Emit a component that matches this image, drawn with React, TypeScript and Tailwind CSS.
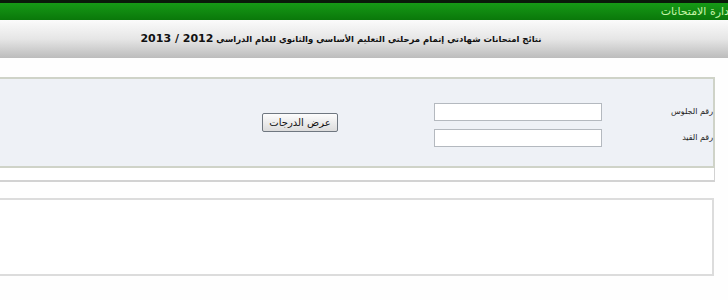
import React from "react";

export default function App() {
  return (
    <div className="w-[728px] h-[300px] overflow-hidden bg-[#fefefe] flex flex-col" style={{ fontFamily: '"DejaVu Sans", "Noto Sans", sans-serif' }}>
      <div className="h-[20px] border-t-[3px] border-[#0a1a0a] bg-gradient-to-b from-[#169a16] to-[#0a780a] flex justify-end items-center overflow-hidden shrink-0">
        <span dir="rtl" className="text-[11px] text-[#c6f3a8] mr-[-4px] whitespace-nowrap leading-none">إدارة الامتحانات</span>
      </div>
      <div className="h-[38px] shrink-0 bg-gradient-to-b from-[#fbfbfb] via-[#e6e6e6] to-[#bcbcbc] flex items-center justify-center">
        <span dir="rtl" className="text-[8.5px] font-bold text-[#111] whitespace-nowrap mr-[46px]">
          نتائج امتحانات شهادتي إتمام مرحلتي التعليم الأساسي والثانوي للعام الدراسي <span className="text-[11px]">2012 / 2013</span>
        </span>
      </div>
      <div className="h-[19px] shrink-0" />
      <div dir="rtl" className="w-[715px] h-[91px] shrink-0 bg-[#eef1f6] border-y-2 border-r-2 border-[#cfd3c8] flex items-start pt-[24px]">
        <div className="grid grid-cols-[40px_168px] gap-x-[71px] gap-y-[8px] items-center">
          <span className="text-[8px] text-[#222] whitespace-nowrap">رقم الجلوس</span>
          <input className="h-[18px] w-[168px] bg-white border border-[#b4b9bf] outline-none" />
          <span className="text-[8px] text-[#222] whitespace-nowrap">رقم القيد</span>
          <input className="h-[18px] w-[168px] bg-white border border-[#b4b9bf] outline-none" />
        </div>
        <button className="mr-[96px] mt-[10px] h-[19px] w-[76px] rounded-[2px] border border-[#6f7780] bg-gradient-to-b from-[#fdfdfd] to-[#dcdcdc] text-[10px] text-[#111] leading-none">
          عرض الدرجات
        </button>
      </div>
      <div className="w-[715px] h-[14px] shrink-0 bg-white border-b-2 border-r border-[#d2d2d2]" />
      <div className="h-[16px] shrink-0" />
      <div className="w-[714px] h-[78px] shrink-0 bg-white border-y-2 border-r-2 border-[#dcdcdc]" />
    </div>
  );
}
